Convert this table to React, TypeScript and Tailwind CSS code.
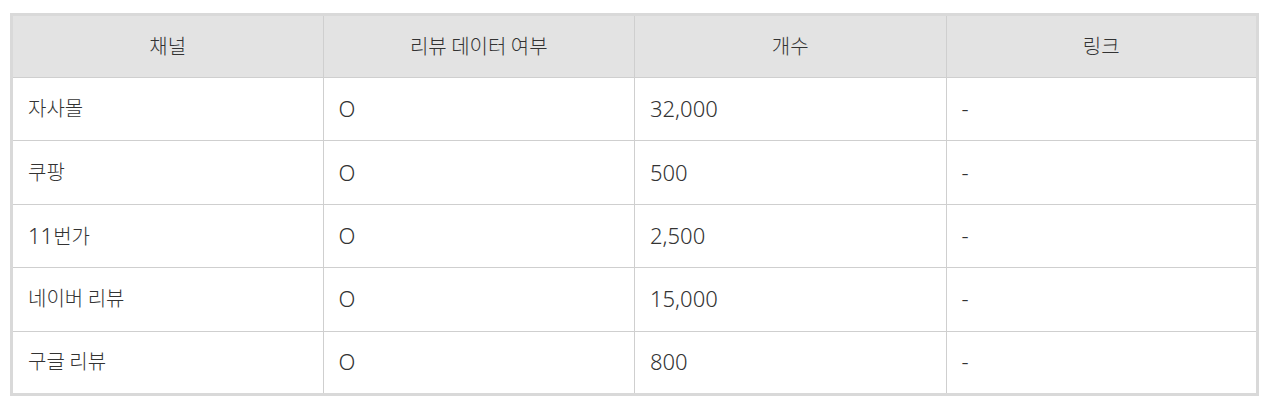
const rows = [
  { channel: '자사몰', review: 'O', count: '32,000', link: '-' },
  { channel: '쿠팡', review: 'O', count: '500', link: '-' },
  { channel: '11번가', review: 'O', count: '2,500', link: '-' },
  { channel: '네이버 리뷰', review: 'O', count: '15,000', link: '-' },
  { channel: '구글 리뷰', review: 'O', count: '800', link: '-' },
];

const headers = ['채널', '리뷰 데이터 여부', '개수', '링크'];

// latin runs are drawn a bit larger than hangul, as in the source page
function Txt({ s }: { s: string }) {
  const parts = s.match(/[\x20-\x7e]+|[^\x20-\x7e]+/g) ?? [];
  return (
    <>
      {parts.map((p, i) =>
        /^[\x20-\x7e]+$/.test(p) && p.trim() ? (
          <span key={i} className="text-[22px] font-light" style={{ fontFamily: '"Noto Sans", sans-serif' }}>
            {p}
          </span>
        ) : (
          <span key={i}>{p}</span>
        )
      )}
    </>
  );
}

export default function App() {
  return (
    <div
      className="bg-white px-[10px] pt-[13px] h-[410px] text-[#333] text-[20px] font-light leading-none"
      style={{ fontFamily: '"Noto Sans CJK KR", "Noto Sans", sans-serif' }}
    >
      <table className="w-[1249px] table-fixed border-collapse border-[3px] border-[#d9d9d9]">
        <thead>
          <tr className="h-[63px] bg-[#e3e3e3]">
            {headers.map((h) => (
              <th key={h} className="border border-[#cfcfcf] font-light text-center align-middle pb-[2px]">
                {h}
              </th>
            ))}
          </tr>
        </thead>
        <tbody>
          {rows.map((r) => (
            <tr key={r.channel} className="h-[63.4px]">
              <td className="border border-[#cfcfcf] px-[15px] align-middle pb-[2px]">
                <Txt s={r.channel} />
              </td>
              <td className="border border-[#cfcfcf] px-[15px] align-middle pb-[2px]">
                <Txt s={r.review} />
              </td>
              <td className="border border-[#cfcfcf] px-[15px] align-middle pb-[2px]">
                <Txt s={r.count} />
              </td>
              <td className="border border-[#cfcfcf] px-[15px] align-middle pb-[2px]">
                <Txt s={r.link} />
              </td>
            </tr>
          ))}
        </tbody>
      </table>
    </div>
  );
}
